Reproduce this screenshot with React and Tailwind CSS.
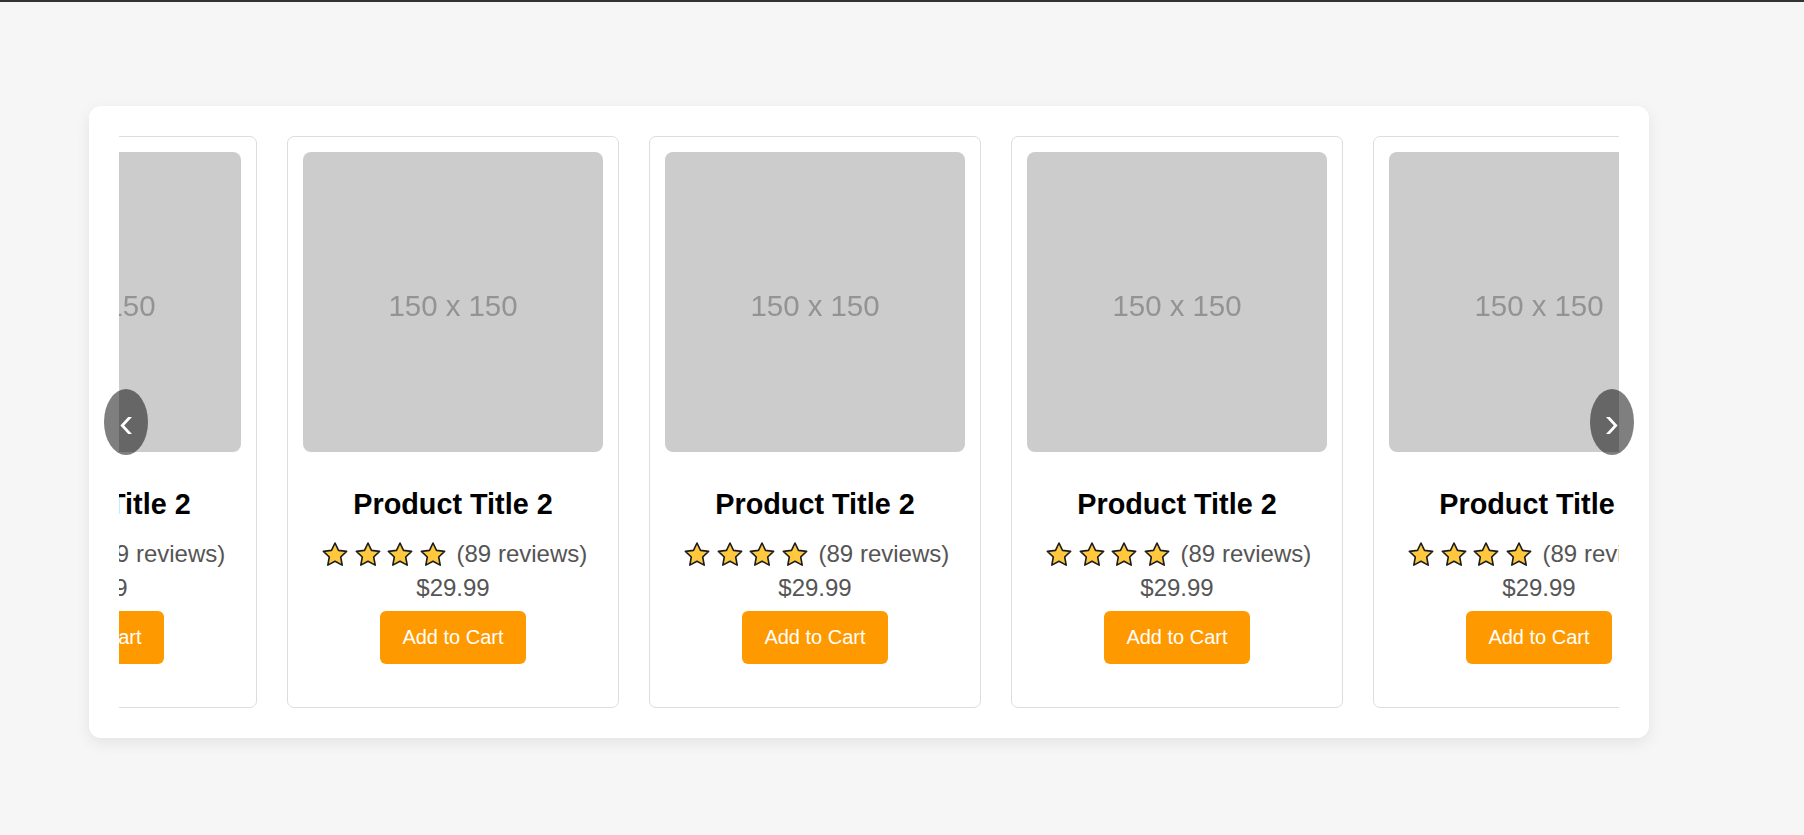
import { useState } from 'react';

const products = Array.from({ length: 6 }, (_, i) => ({
  id: i + 1,
  title: 'Product Title 2',
  reviews: 89,
  rating: 4,
  price: '$29.99',
}));

function Star() {
  return (
    <svg width="26" height="25" viewBox="0 0 26 25">
      <path
        d="M13 1 16.5 8.4 24.6 9.4 18.7 15 20.2 23.1 13 19.2 5.8 23.1 7.3 15 1.4 9.4 9.5 8.4Z"
        fill="#ffc83d"
        stroke="#1c1c1c"
        strokeWidth="1.6"
        strokeLinejoin="round"
      />
    </svg>
  );
}

function Chevron({ dir }) {
  return (
    <svg width="12" height="17" viewBox="0 0 12 17">
      {dir === 'left' ? (
        <path d="M8.2 0 12 0 4.2 8.5 12 17 8.2 17 0.4 8.5Z" fill="#fff" />
      ) : (
        <path d="M3.8 0 0 0 7.8 8.5 0 17 3.8 17 11.6 8.5Z" fill="#fff" />
      )}
    </svg>
  );
}

function ProductCard({ product }) {
  return (
    <div className="shrink-0 w-[332px] h-[572px] bg-white border border-[#ddd] rounded-[7px] p-[15px] flex flex-col items-center text-center">
      {/* placeholder image */}
      <div className="w-[300px] h-[300px] shrink-0 bg-[#ccc] rounded-[8px] flex items-center justify-center pt-[7px]">
        <span className="text-[29.4px] leading-[34px] text-[#939393] blur-[0.3px]">150 x 150</span>
      </div>
      <h3 className="mt-[36px] text-[28.8px] leading-[33px] font-bold text-black whitespace-nowrap">
        {product.title}
      </h3>
      <div className="mt-[18px] flex items-center justify-center whitespace-nowrap leading-[30px]">
        {Array.from({ length: product.rating }).map((_, i) => (
          <span key={i} className="w-[32.7px] flex justify-center">
            <Star />
          </span>
        ))}
        <span className="ml-[7px] text-[24px] text-[#555]">({product.reviews} reviews)</span>
      </div>
      <div className="mt-[4px] text-[24px] leading-[30px] text-[#555]">{product.price}</div>
      <button className="mt-[8px] bg-[#ff9900] text-white text-[20px] leading-[23px] py-[15px] px-[22.5px] rounded-[6px] whitespace-nowrap">
        Add to Cart
      </button>
    </div>
  );
}

export default function App() {
  const [offset] = useState(0);

  return (
    <div className="min-h-screen bg-[#f6f6f6] font-['Liberation_Sans',Arial,sans-serif]">
      <div className="h-[2px] bg-[#333]" />
      <div className="pt-[104px] pl-[89px]">
        <div className="relative w-[1560px] bg-white rounded-[12px] p-[30px] shadow-[0_5px_15px_rgba(0,0,0,0.08)]">
          <div className="overflow-hidden">
            <div className="flex gap-[30px] translate-x-[-194px]" data-offset={offset}>
              {products.map((p) => (
                <ProductCard key={p.id} product={p} />
              ))}
            </div>
          </div>
          <button className="absolute left-[15px] top-1/2 -translate-y-1/2 w-[44px] h-[66px] rounded-[50%] bg-black/50 flex items-center justify-center pt-[6px]">
            <Chevron dir="left" />
          </button>
          <button className="absolute right-[15px] top-1/2 -translate-y-1/2 w-[44px] h-[66px] rounded-[50%] bg-black/50 flex items-center justify-center pt-[6px]">
            <Chevron dir="right" />
          </button>
        </div>
      </div>
    </div>
  );
}
